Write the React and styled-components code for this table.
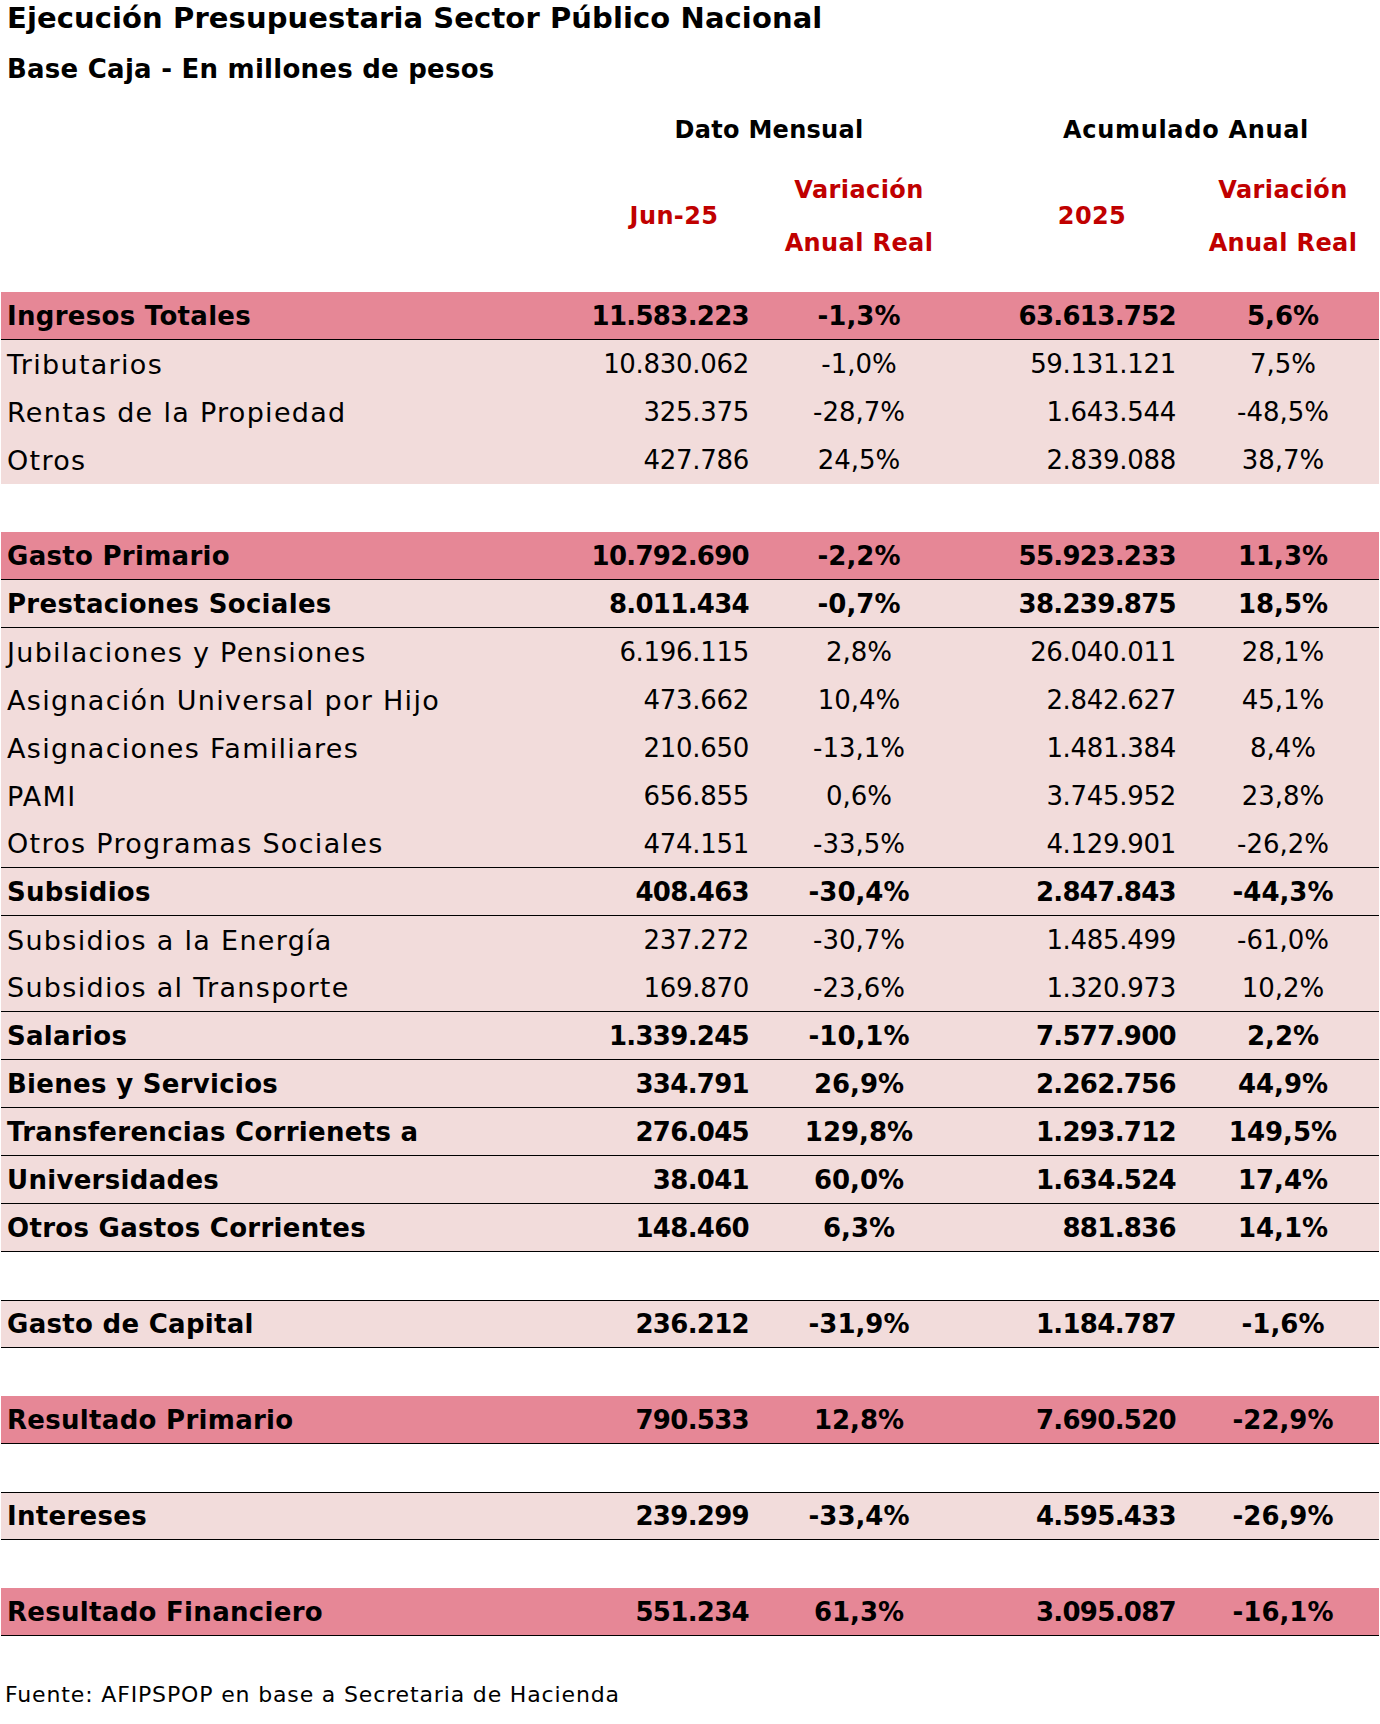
import React from 'react';
import styled, { createGlobalStyle } from 'styled-components';

const GlobalStyle = createGlobalStyle`
  body {
    margin: 0;
    background: #fff;
    font-family: 'DejaVu Sans', 'Open Sans', sans-serif;
    color: #000;
  }
`;

const COLS = '578px 180px 200px 228px 192px';

const Page = styled.div`
  width: 1380px;
  padding: 0 1px;
  box-sizing: border-box;
`;

const Title = styled.h1`
  margin: 0;
  padding: 0 0 0 6px;
  height: 38px;
  line-height: 36px;
  font-size: 29px;
  font-weight: 700;
  letter-spacing: 0.1px;
`;

const Subtitle = styled.h2`
  margin: 0;
  padding: 0 0 0 6px;
  height: 52px;
  line-height: 62px;
  font-size: 26px;
  font-weight: 700;
  letter-spacing: 0.25px;
`;

const HeadGrid = styled.div`
  display: grid;
  grid-template-columns: ${COLS};
  grid-template-rows: 74px 128px;
  height: 202px;
`;

const GroupHead = styled.div`
  grid-row: 1;
  grid-column: ${p => p.$cols};
  padding-left: ${p => p.$shift || 0}px;
  padding-top: 6px;
  display: flex;
  align-items: center;
  justify-content: center;
  font-size: 24px;
  font-weight: 700;
  letter-spacing: ${p => p.$spacing || 0}px;
`;

const ColHead = styled.div`
  grid-row: 2;
  grid-column: ${p => p.$col};
  padding-left: ${p => p.$shift || 0}px;
  padding-bottom: ${p => (p.$stack ? 0 : 24)}px;
  display: flex;
  flex-direction: column;
  align-items: center;
  justify-content: ${p => (p.$stack ? 'flex-start' : 'center')};
  color: #c00000;
  font-size: 24px;
  font-weight: 700;
  line-height: 53px;
  letter-spacing: 0.4px;
`;

const Table = styled.div`
  display: flex;
  flex-direction: column;
`;

const bg = { total: '#e68796', sub: '#f2dcdb', item: '#f2dcdb', blank: 'transparent' };

const Row = styled.div`
  display: grid;
  grid-template-columns: ${COLS};
  height: 48px;
  box-sizing: border-box;
  align-items: center;
  background: ${p => bg[p.$kind]};
  border-bottom: ${p => (p.$bottom ? '1.5px solid #000' : 'none')};
  border-top: ${p => (p.$top ? '1.5px solid #000' : 'none')};
  font-size: 26px;
  font-weight: ${p => (p.$bold ? 700 : 400)};
`;

const Label = styled.div`
  padding-left: 6px;
  white-space: nowrap;
  font-size: ${p => (p.$bold ? 26 : 27)}px;
  letter-spacing: ${p => (p.$bold ? '0.3px' : '1.3px')};
`;

const Num = styled.div`
  text-align: right;
  padding-right: ${p => p.$pad}px;
  letter-spacing: ${p => (p.$bold ? '-0.7px' : '-0.3px')};
`;

const Pct = styled.div`
  text-align: center;
`;

const Footnote = styled.div`
  padding: 46px 0 0 4px;
  font-size: 22px;
  letter-spacing: 0.85px;
`;

const rows = [
  { kind: 'total', bottom: true, label: 'Ingresos Totales', v: ['11.583.223', '-1,3%', '63.613.752', '5,6%'] },
  { kind: 'item', label: 'Tributarios', v: ['10.830.062', '-1,0%', '59.131.121', '7,5%'] },
  { kind: 'item', label: 'Rentas de la Propiedad', v: ['325.375', '-28,7%', '1.643.544', '-48,5%'] },
  { kind: 'item', label: 'Otros', v: ['427.786', '24,5%', '2.839.088', '38,7%'] },
  { kind: 'blank' },
  { kind: 'total', bottom: true, label: 'Gasto Primario', v: ['10.792.690', '-2,2%', '55.923.233', '11,3%'] },
  { kind: 'sub', bottom: true, label: 'Prestaciones Sociales', v: ['8.011.434', '-0,7%', '38.239.875', '18,5%'] },
  { kind: 'item', label: 'Jubilaciones y Pensiones', v: ['6.196.115', '2,8%', '26.040.011', '28,1%'] },
  { kind: 'item', label: 'Asignación Universal por Hijo', v: ['473.662', '10,4%', '2.842.627', '45,1%'] },
  { kind: 'item', label: 'Asignaciones Familiares', v: ['210.650', '-13,1%', '1.481.384', '8,4%'] },
  { kind: 'item', label: 'PAMI', v: ['656.855', '0,6%', '3.745.952', '23,8%'] },
  { kind: 'item', bottom: true, label: 'Otros Programas Sociales', v: ['474.151', '-33,5%', '4.129.901', '-26,2%'] },
  { kind: 'sub', bottom: true, label: 'Subsidios', v: ['408.463', '-30,4%', '2.847.843', '-44,3%'] },
  { kind: 'item', label: 'Subsidios a la Energía', v: ['237.272', '-30,7%', '1.485.499', '-61,0%'] },
  { kind: 'item', bottom: true, label: 'Subsidios al Transporte', v: ['169.870', '-23,6%', '1.320.973', '10,2%'] },
  { kind: 'sub', bottom: true, label: 'Salarios', v: ['1.339.245', '-10,1%', '7.577.900', '2,2%'] },
  { kind: 'sub', bottom: true, label: 'Bienes y Servicios', v: ['334.791', '26,9%', '2.262.756', '44,9%'] },
  { kind: 'sub', bottom: true, label: 'Transferencias Corrienets a', v: ['276.045', '129,8%', '1.293.712', '149,5%'] },
  { kind: 'sub', bottom: true, label: 'Universidades', v: ['38.041', '60,0%', '1.634.524', '17,4%'] },
  { kind: 'sub', bottom: true, label: 'Otros Gastos Corrientes', v: ['148.460', '6,3%', '881.836', '14,1%'] },
  { kind: 'blank' },
  { kind: 'sub', top: true, bottom: true, label: 'Gasto de Capital', v: ['236.212', '-31,9%', '1.184.787', '-1,6%'] },
  { kind: 'blank' },
  { kind: 'total', bottom: true, label: 'Resultado Primario', v: ['790.533', '12,8%', '7.690.520', '-22,9%'] },
  { kind: 'blank' },
  { kind: 'sub', top: true, bottom: true, label: 'Intereses', v: ['239.299', '-33,4%', '4.595.433', '-26,9%'] },
  { kind: 'blank' },
  { kind: 'total', bottom: true, label: 'Resultado Financiero', v: ['551.234', '61,3%', '3.095.087', '-16,1%'] },
];

const App = () => (
  <Page>
    <GlobalStyle />
    <Title>Ejecución Presupuestaria Sector Público Nacional</Title>
    <Subtitle>Base Caja - En millones de pesos</Subtitle>
    <HeadGrid>
      <GroupHead $cols="2 / span 2" $spacing={0.3}>Dato Mensual</GroupHead>
      <GroupHead $cols="4 / span 2" $shift={34} $spacing={0.7}>Acumulado Anual</GroupHead>
      <ColHead $col={2} $shift={10}>Jun-25</ColHead>
      <ColHead $col={3} $stack>
        <span>Variación</span>
        <span>Anual Real</span>
      </ColHead>
      <ColHead $col={4} $shift={38}>2025</ColHead>
      <ColHead $col={5} $stack>
        <span>Variación</span>
        <span>Anual Real</span>
      </ColHead>
    </HeadGrid>
    <Table>
      {rows.map((r, i) => {
        const bold = r.kind === 'total' || r.kind === 'sub';
        return (
          <Row key={i} $kind={r.kind} $bold={bold} $top={r.top} $bottom={r.bottom}>
            {r.kind !== 'blank' && (
              <>
                <Label $bold={bold}>{r.label}</Label>
                <Num $bold={bold} $pad={10}>{r.v[0]}</Num>
                <Pct>{r.v[1]}</Pct>
                <Num $bold={bold} $pad={11}>{r.v[2]}</Num>
                <Pct>{r.v[3]}</Pct>
              </>
            )}
          </Row>
        );
      })}
    </Table>
    <Footnote>Fuente: AFIPSPOP en base a Secretaria de Hacienda</Footnote>
  </Page>
);

export default App;
